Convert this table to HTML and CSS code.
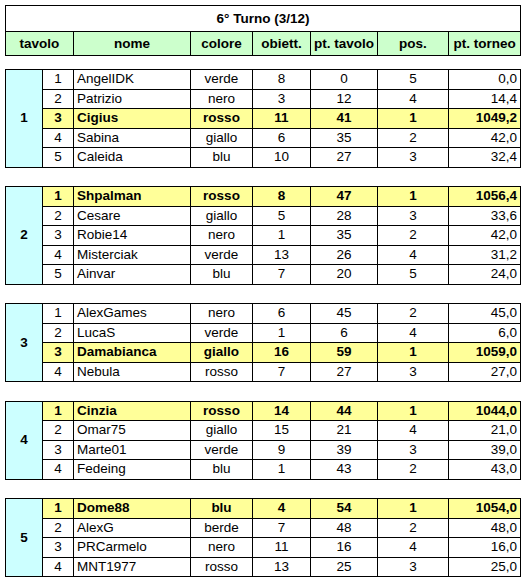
FILE: index.html
```html
<!DOCTYPE html>
<html lang="it">
<head>
    <meta charset="UTF-8">
    <title>6° Turno (3/12)</title>
    <link rel="stylesheet" href="styles.css">
</head>
<body>
    <table class="standings">
        <colgroup>
            <col class="c-tavolo">
            <col class="c-num">
            <col class="c-nome">
            <col class="c-colore">
            <col class="c-obiett">
            <col class="c-pttavolo">
            <col class="c-pos">
            <col class="c-pttorneo">
        </colgroup>
        <tr class="title-row">
            <td colspan="8">6° Turno (3/12)</td>
        </tr>
        <tr class="head-row">
            <th colspan="2">tavolo</th>
            <th>nome</th>
            <th>colore</th>
            <th>obiett.</th>
            <th>pt. tavolo</th>
            <th>pos.</th>
            <th>pt. torneo</th>
        </tr>
        <tr class="spacer first"><td colspan="8"></td></tr>

        <!-- tavolo 1 -->
        <tr>
            <td class="table-no" rowspan="5">1</td>
            <td class="num">1</td><td class="name">AngelIDK</td><td>verde</td><td>8</td><td>0</td><td>5</td><td class="score">0,0</td>
        </tr>
        <tr><td class="num">2</td><td class="name">Patrizio</td><td>nero</td><td>3</td><td>12</td><td>4</td><td class="score">14,4</td></tr>
        <tr class="winner"><td class="num">3</td><td class="name">Cigius</td><td>rosso</td><td>11</td><td>41</td><td>1</td><td class="score">1049,2</td></tr>
        <tr><td class="num">4</td><td class="name">Sabina</td><td>giallo</td><td>6</td><td>35</td><td>2</td><td class="score">42,0</td></tr>
        <tr><td class="num">5</td><td class="name">Caleida</td><td>blu</td><td>10</td><td>27</td><td>3</td><td class="score">32,4</td></tr>
        <tr class="spacer"><td colspan="8"></td></tr>

        <!-- tavolo 2 -->
        <tr class="winner">
            <td class="table-no" rowspan="5">2</td>
            <td class="num">1</td><td class="name">Shpalman</td><td>rosso</td><td>8</td><td>47</td><td>1</td><td class="score">1056,4</td>
        </tr>
        <tr><td class="num">2</td><td class="name">Cesare</td><td>giallo</td><td>5</td><td>28</td><td>3</td><td class="score">33,6</td></tr>
        <tr><td class="num">3</td><td class="name">Robie14</td><td>nero</td><td>1</td><td>35</td><td>2</td><td class="score">42,0</td></tr>
        <tr><td class="num">4</td><td class="name">Misterciak</td><td>verde</td><td>13</td><td>26</td><td>4</td><td class="score">31,2</td></tr>
        <tr><td class="num">5</td><td class="name">Ainvar</td><td>blu</td><td>7</td><td>20</td><td>5</td><td class="score">24,0</td></tr>
        <tr class="spacer"><td colspan="8"></td></tr>

        <!-- tavolo 3 -->
        <tr>
            <td class="table-no" rowspan="4">3</td>
            <td class="num">1</td><td class="name">AlexGames</td><td>nero</td><td>6</td><td>45</td><td>2</td><td class="score">45,0</td>
        </tr>
        <tr><td class="num">2</td><td class="name">LucaS</td><td>verde</td><td>1</td><td>6</td><td>4</td><td class="score">6,0</td></tr>
        <tr class="winner"><td class="num">3</td><td class="name">Damabianca</td><td>giallo</td><td>16</td><td>59</td><td>1</td><td class="score">1059,0</td></tr>
        <tr><td class="num">4</td><td class="name">Nebula</td><td>rosso</td><td>7</td><td>27</td><td>3</td><td class="score">27,0</td></tr>
        <tr class="spacer"><td colspan="8"></td></tr>

        <!-- tavolo 4 -->
        <tr class="winner">
            <td class="table-no" rowspan="4">4</td>
            <td class="num">1</td><td class="name">Cinzia</td><td>rosso</td><td>14</td><td>44</td><td>1</td><td class="score">1044,0</td>
        </tr>
        <tr><td class="num">2</td><td class="name">Omar75</td><td>giallo</td><td>15</td><td>21</td><td>4</td><td class="score">21,0</td></tr>
        <tr><td class="num">3</td><td class="name">Marte01</td><td>verde</td><td>9</td><td>39</td><td>3</td><td class="score">39,0</td></tr>
        <tr><td class="num">4</td><td class="name">Fedeing</td><td>blu</td><td>1</td><td>43</td><td>2</td><td class="score">43,0</td></tr>
        <tr class="spacer"><td colspan="8"></td></tr>

        <!-- tavolo 5 -->
        <tr class="winner">
            <td class="table-no" rowspan="4">5</td>
            <td class="num">1</td><td class="name">Dome88</td><td>blu</td><td>4</td><td>54</td><td>1</td><td class="score">1054,0</td>
        </tr>
        <tr><td class="num">2</td><td class="name">AlexG</td><td>berde</td><td>7</td><td>48</td><td>2</td><td class="score">48,0</td></tr>
        <tr><td class="num">3</td><td class="name">PRCarmelo</td><td>nero</td><td>11</td><td>16</td><td>4</td><td class="score">16,0</td></tr>
        <tr><td class="num">4</td><td class="name">MNT1977</td><td>rosso</td><td>13</td><td>25</td><td>3</td><td class="score">25,0</td></tr>
    </table>
</body>
</html>
```

FILE: styles.css
```css
body {
    margin: 0;
    padding: 5px;
    background: #fff;
    color: #000;
    font-family: "Liberation Sans", Arial, sans-serif;
    font-size: 13.5px;
}

.standings {
    border-collapse: collapse;
    table-layout: fixed;
    width: 516px;
}

.c-tavolo { width: 37px; }
.c-num { width: 31px; }
.c-nome { width: 117px; }
.c-colore { width: 62px; }
.c-obiett { width: 58px; }
.c-pttavolo { width: 67px; }
.c-pos { width: 71px; }
.c-pttorneo { width: 72px; }

.standings td,
.standings th {
    border: 1px solid #000;
    padding: 0 3px;
    text-align: center;
    vertical-align: middle;
    white-space: nowrap;
    overflow: hidden;
    line-height: 16px;
}

.standings tr {
    height: 19.5px;
}

/* title + column headers */
.title-row {
    height: 26px !important;
}

.title-row td {
    font-weight: bold;
}

.head-row {
    height: 24px !important;
}

.head-row th {
    background: #ccffcc;
    font-weight: bold;
}

/* empty row between tables */
.spacer td {
    border-left: none;
    border-right: none;
}

.spacer.first {
    height: 14px !important;
}

.table-no {
    background: #ccffff;
    font-weight: bold;
}

.num {
    text-align: center;
}

.standings .name {
    text-align: left;
}

.standings .score {
    text-align: right;
}

/* winner of each table */
.winner td {
    background: #ffff99;
    font-weight: bold;
}

.winner td.table-no {
    background: #ccffff;
}
```
